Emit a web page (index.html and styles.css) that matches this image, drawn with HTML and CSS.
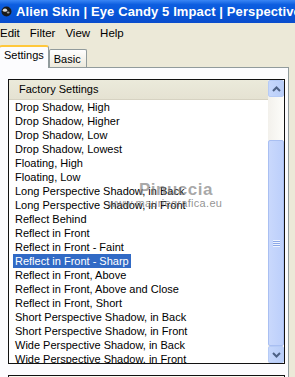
FILE: index.html
```html
<!DOCTYPE html>
<html lang="en">
<head>
    <meta charset="UTF-8">
    <meta name="viewport" content="width=device-width, initial-scale=1.0">
    <title>Alien Skin | Eye Candy 5 Impact | Perspective</title>
    <link rel="stylesheet" href="styles.css">
</head>
<body>

    <div class="titlebar">
        <svg class="app-icon" width="11" height="11" viewBox="0 0 11 11">
            <circle cx="5.5" cy="5.5" r="5" fill="#1a1a1a"/>
            <ellipse cx="4" cy="4.2" rx="2.2" ry="1.6" fill="#d8d8d8"/>
            <ellipse cx="7.2" cy="6.5" rx="1.4" ry="1" fill="#9a9a9a"/>
        </svg>
        <span class="title">Alien Skin | Eye Candy 5 Impact | Perspective</span>
    </div>

    <div class="menubar">
        <span class="menu-item">Edit</span>
        <span class="menu-item">Filter</span>
        <span class="menu-item">View</span>
        <span class="menu-item">Help</span>
    </div>

    <div class="tabs">
        <div class="tab active">Settings</div>
        <div class="tab">Basic</div>
    </div>

    <div class="panel">
        <div class="listbox">
            <div class="list-main">
                <div class="list-header">Factory Settings</div>
                <div class="list-rows">
                    <div class="row"><span>Drop Shadow, High</span></div>
                    <div class="row"><span>Drop Shadow, Higher</span></div>
                    <div class="row"><span>Drop Shadow, Low</span></div>
                    <div class="row"><span>Drop Shadow, Lowest</span></div>
                    <div class="row"><span>Floating, High</span></div>
                    <div class="row"><span>Floating, Low</span></div>
                    <div class="row"><span>Long Perspective Shadow, in Back</span></div>
                    <div class="row"><span>Long Perspective Shadow, in Front</span></div>
                    <div class="row"><span>Reflect Behind</span></div>
                    <div class="row"><span>Reflect in Front</span></div>
                    <div class="row"><span>Reflect in Front - Faint</span></div>
                    <div class="row selected"><span>Reflect in Front - Sharp</span></div>
                    <div class="row"><span>Reflect in Front, Above</span></div>
                    <div class="row"><span>Reflect in Front, Above and Close</span></div>
                    <div class="row"><span>Reflect in Front, Short</span></div>
                    <div class="row"><span>Short Perspective Shadow, in Back</span></div>
                    <div class="row"><span>Short Perspective Shadow, in Front</span></div>
                    <div class="row"><span>Wide Perspective Shadow, in Back</span></div>
                    <div class="row"><span>Wide Perspective Shadow, in Front</span></div>
                </div>
            </div>
            <div class="scrollbar">
                <div class="sb-btn">
                    <svg width="9" height="6" viewBox="0 0 9 6"><path d="M1 5 L4.5 1.5 L8 5" fill="none" stroke="#4d6185" stroke-width="2"/></svg>
                </div>
                <div class="sb-track">
                    <div class="sb-thumb">
                        <div class="grip"></div>
                    </div>
                </div>
                <div class="sb-btn">
                    <svg width="9" height="6" viewBox="0 0 9 6"><path d="M1 1 L4.5 4.5 L8 1" fill="none" stroke="#4d6185" stroke-width="2"/></svg>
                </div>
            </div>

            <!-- watermark over the list -->
            <div class="watermark">
                <div class="wm-name">Pinuccia</div>
                <div class="wm-url">www.mauriegrafica.eu</div>
            </div>
        </div>

        <div class="nextbox"></div>
    </div>

</body>
</html>
```

FILE: styles.css
```css
body {
    margin: 0;
    width: 295px;
    height: 377px;
    overflow: hidden;
    background: #ece9d8;
    font-family: "Liberation Sans", Arial, sans-serif;
    font-size: 11px;
    color: #000;
}
.titlebar {
    height: 23px;
    display: flex;
    align-items: center;
    gap: 4px;
    padding-left: 1px;
    background: linear-gradient(to bottom, #3a86f5 0%, #0d5ee0 20%, #0655d8 60%, #0a4ccc 100%);
    white-space: nowrap;
    overflow: hidden;
}
.app-icon {
    flex: none;
}
.title {
    color: white;
    font-weight: bold;
    font-size: 13px;
    letter-spacing: 0.1px;
}
.menubar {
    height: 17px;
    display: flex;
    align-items: center;
    padding-top: 1px;
}
.menu-item {
    margin-right: 10px;
    font-size: 11.5px;
}
.tabs {
    height: 26px;
    display: flex;
    align-items: flex-end;
}
.tab {
    height: 17px;
    padding: 0 5px 0 4px;
    border: 1px solid #919b9c;
    border-bottom: none;
    border-radius: 2px 2px 0 0;
    background: linear-gradient(to bottom, #fefefe, #ece9dc);
    line-height: 18px;
    font-size: 11px;
}
.tab.active {
    height: 21px;
    margin-left: -1px;
    padding: 0 4px 0 4px;
    background: #fcfcfe;
    border-top: 2px solid #ffc83c;
    border-radius: 3px 3px 0 0;
    line-height: 17px;
    position: relative;
    z-index: 1;
    margin-bottom: -1px;
}
.panel {
    height: 320px;
    width: 290px;
    margin-left: -1px;
    border-top: 1px solid #919b9c;
    border-right: 1px solid #919b9c;
    background: #fcfcfe;
    box-sizing: border-box;
    padding: 11px 0 0 9px;
}
.listbox {
    width: 277px;
    height: 285px;
    box-sizing: border-box;
    border: 1px solid #111;
    background: white;
    display: flex;
    position: relative;
    overflow: hidden;
}
.list-main {
    flex: 1;
    overflow: hidden;
}
.list-header {
    height: 19px;
    border-bottom: 1px solid #d6d2c2;
    background: linear-gradient(to bottom, #ebeadb, #e5e2d2);
    padding-left: 10px;
    line-height: 19px;
    white-space: nowrap;
}
.row {
    height: 14px;
    line-height: 14px;
    padding-left: 4px;
    white-space: nowrap;
}
.row span {
    padding: 0 2px;
    display: inline-block;
}
.row.selected span {
    background: #316ac5;
    color: white;
}
.scrollbar {
    width: 16px;
    flex: none;
    display: flex;
    flex-direction: column;
    background: linear-gradient(to right, #f3f1ec, #fdfdfa);
}
.sb-btn {
    height: 17px;
    box-sizing: border-box;
    border: 1px solid #b6cbf6;
    border-radius: 2px;
    background: linear-gradient(to right, #c6d7fc, #b8cdf8);
    display: flex;
    align-items: center;
    justify-content: center;
}
.sb-track {
    flex: 1;
    padding: 43px 0 0;
    display: flex;
    flex-direction: column;
}
.sb-thumb {
    flex: 1;
    box-sizing: border-box;
    border: 1px solid #a9bff2;
    border-radius: 2px;
    background: linear-gradient(to right, #c9d8fc, #bccffb);
    display: flex;
    align-items: center;
    justify-content: center;
}
.grip {
    width: 7px;
    height: 7px;
    background: repeating-linear-gradient(to bottom, #eef3fe 0, #eef3fe 1px, #8ca8e8 1px, #8ca8e8 2px);
}
.watermark {
    position: absolute;
    left: 99px;
    top: 101px;
    color: rgba(110, 110, 110, 0.75);
    pointer-events: none;
}
.wm-name {
    margin-left: 31px;
    font-size: 17px;
    font-weight: bold;
    letter-spacing: 0.5px;
    line-height: 17px;
    color: rgba(130, 130, 130, 0.7);
}
.wm-url {
    font-size: 11px;
    line-height: 10px;
    letter-spacing: 0.3px;
}
.nextbox {
    margin-top: 11px;
    width: 277px;
    height: 20px;
    box-sizing: border-box;
    border: 1px solid #111;
    background: #f8f7ee;
}
```
